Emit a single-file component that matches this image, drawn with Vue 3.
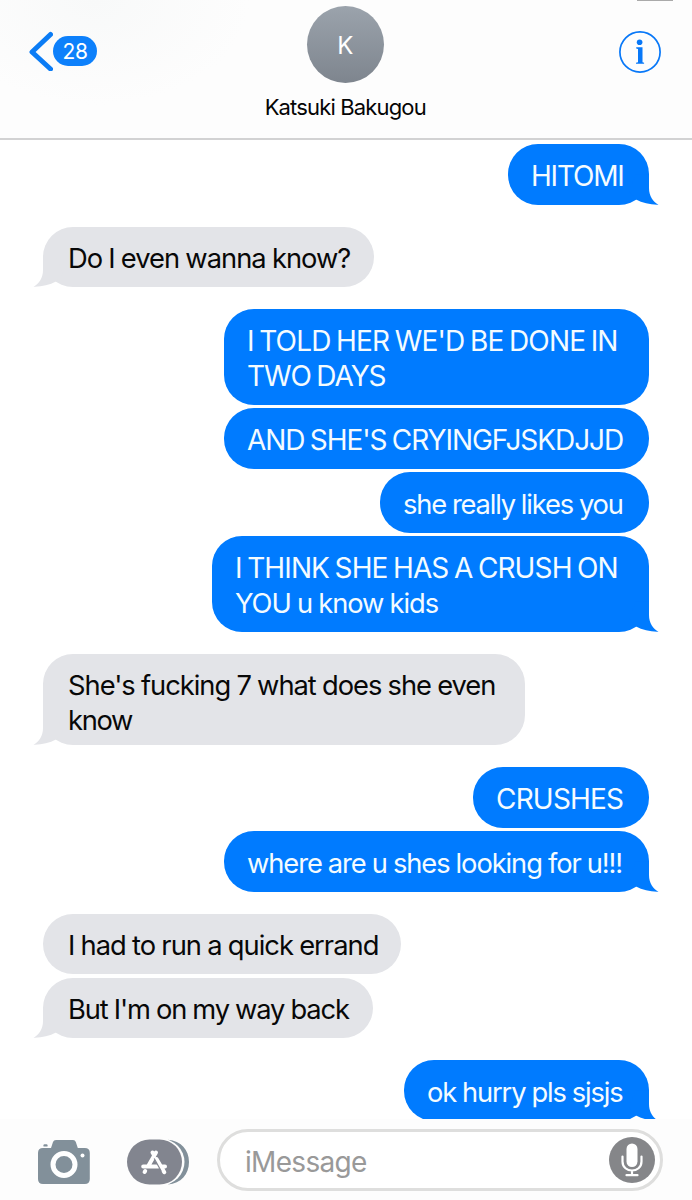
<template>
  <div class="chat">
    <header class="chat-header">
      <button class="back-btn" title="Back">
        <svg class="back-icon" viewBox="0 0 24 40" width="24" height="40">
          <path d="M21.5 3.500 3 21 21.500 38" />
        </svg>
        <span class="unread">28</span>
      </button>

      <div class="contact">
        <div class="avatar">K</div>
        <span class="contact-name">Katsuki Bakugou</span>
      </div>

      <button class="info-btn" title="Info">
        <svg viewBox="0 0 42 42" width="42" height="42">
          <circle cx="21" cy="21" r="20.1" fill="none" stroke="#0878f8" stroke-width="1.7" />
          <circle cx="20.6" cy="11.2" r="2.8" fill="#0878f8" />
          <path d="M17.200 16.300h6.300v15l1.600.4v1h-8.100v-1l2-.4V18l-1.800-.5z" fill="#0878f8" />
        </svg>
      </button>
      <span class="status-mark"></span>
    </header>

    <main class="messages">
      <div v-for="(group, g) in groups" :key="g" class="group" :class="group.from">
        <div
          v-for="(message, m) in group.messages"
          :key="m"
          class="bubble"
          :class="{ long: message.lines.length > 1 }"
          :style="{ width: message.width + 'px' }"
        >
          <svg v-if="m === group.messages.length - 1" class="tail" viewBox="0 0 34 34" width="34" height="34">
            <path d="M24 3.500V17C24 25 28 31 33.500 33.700C26 34 17.500 32 11 28.500L4 20L11 3.500Z" />
          </svg>
          <span
            v-for="line in message.lines"
            :key="line.text"
            class="line"
            :class="{ caps: isCaps(line.text) }"
            :style="{ letterSpacing: line.spacing + 'px' }"
          >{{ line.text }}</span>
        </div>
      </div>
    </main>

    <footer class="composer">
      <svg class="camera" viewBox="0 0 54 46" width="54" height="46">
        <path
          d="M6 9h8l2-6q.6-2 3-2h17q2.200 0 2.800 2l2 6h7q5 0 5 5v26q0 5-5 5H6q-5 0-5-5V14q0-5 5-5z"
          fill="#82909a"
        />
        <path d="M6.500 7.500V6.200q0-1 1-1h2q1 0 1 1v1.300z" fill="#82909a" />
        <circle cx="27" cy="25.500" r="11" fill="none" stroke="#fff" stroke-width="5" />
        <circle cx="45.500" cy="16.500" r="2" fill="#fff" />
      </svg>

      <svg class="apps" viewBox="0 0 63 46" width="63" height="46">
        <path d="M41 .8c13 1.200 21 10 21 22.200S54 44.500 41 45.500c17-8 17-36 0-44.700z" fill="#82909a" />
        <rect x="0" y="0" width="57.500" height="46" rx="23" fill="#fdfdfd" />
        <rect x="0" y=".5" width="55" height="45" rx="22.500" fill="#82858f" />
        <g fill="none" stroke="#fff" stroke-width="4" stroke-linecap="round">
          <path d="M29 13.500 21 27.500M25.500 13.500l1.500 2.500M29.500 20l7.800 13.200M16.200 27.500h15M35.500 27.500h2.500" />
          <path d="m18.200 32-.6 1" />
        </g>
        <path d="m27.200 19.500 7.200 13" fill="none" stroke="#82858f" stroke-width="1.200" />
      </svg>

      <div class="input-box">
        <span class="placeholder">iMessage</span>
        <button class="mic-btn" title="Dictate">
          <svg viewBox="0 0 46 46" width="46" height="46">
            <rect x="17.500" y="6.500" width="11" height="23.500" rx="5.500" fill="#fff" />
            <path
              d="M13.500 19.500v5c0 12 19 12 19 0v-5M23 33.500V38M17.500 38.200h11"
              fill="none"
              stroke="#fff"
              stroke-width="2.200"
              stroke-linecap="round"
            />
          </svg>
        </button>
      </div>
    </footer>
  </div>
</template>

<script setup>
const groups = [
  {
    from: 'me',
    messages: [{ width: 141, lines: [{ text: 'HITOMI', spacing: -1.2 }] }]
  },
  {
    from: 'them',
    messages: [{ width: 331, lines: [{ text: 'Do I even wanna know?', spacing: -0.98 }] }]
  },
  {
    from: 'me',
    messages: [
      {
        width: 425,
        lines: [
          { text: "I TOLD HER WE'D BE DONE IN", spacing: -0.84 },
          { text: 'TWO DAYS', spacing: -1.05 }
        ]
      },
      { width: 425, lines: [{ text: "AND SHE'S CRYINGFJSKDJJD", spacing: -1.05 }] },
      { width: 269, lines: [{ text: 'she really likes you', spacing: -1.18 }] },
      {
        width: 437,
        lines: [
          { text: 'I THINK SHE HAS A CRUSH ON', spacing: -0.88 },
          { text: 'YOU u know kids', spacing: -1.02 }
        ]
      }
    ]
  },
  {
    from: 'them',
    messages: [
      {
        width: 482,
        lines: [
          { text: "She's fucking 7 what does she even", spacing: -1 },
          { text: 'know', spacing: -1.3 }
        ]
      }
    ]
  },
  {
    from: 'me',
    messages: [
      { width: 176, lines: [{ text: 'CRUSHES', spacing: -0.8 }] },
      { width: 425, lines: [{ text: 'where are u shes looking for u!!!', spacing: -1.08 }] }
    ]
  },
  {
    from: 'them',
    messages: [
      { width: 358, lines: [{ text: 'I had to run a quick errand', spacing: -0.97 }] },
      { width: 330, lines: [{ text: "But I'm on my way back", spacing: -1.1 }] }
    ]
  },
  {
    from: 'me',
    messages: [{ width: 245, lines: [{ text: 'ok hurry pls sjsjs', spacing: -1.15 }] }]
  }
]

const isCaps = (text) => text === text.toUpperCase()
</script>

<style>
body {
  background: #fff;
}
</style>

<style scoped>
.chat {
  display: flex;
  flex-direction: column;
  width: 692px;
  height: 1200px;
  overflow: hidden;
  background: #fff;
  font-family: Inter, 'Liberation Sans', sans-serif;
}

button {
  padding: 0;
  border: none;
  background: none;
  font-family: inherit;
}

svg {
  display: block;
  flex-shrink: 0;
}

.chat-header {
  position: relative;
  display: grid;
  grid-template-columns: 1fr 200px 1fr;
  box-sizing: border-box;
  height: 140px;
  flex-shrink: 0;
  border-bottom: 2px solid #d2d2d3;
  background: radial-gradient(ellipse 155px 105px at 95px 0, #f8f9f9, #fdfdfd);
}

.back-btn {
  display: flex;
  align-items: center;
  align-self: start;
  margin: 31px 0 0 29px;
}

.back-icon path {
  fill: none;
  stroke: #0b7cf5;
  stroke-width: 5;
  stroke-linecap: round;
  stroke-linejoin: round;
}

.unread {
  width: 44px;
  height: 30px;
  border-radius: 15px;
  background: #0d80fb;
  color: #fff;
  font-size: 21px;
  line-height: 32px;
  letter-spacing: -0.5px;
  text-align: center;
}

.contact {
  display: flex;
  flex-direction: column;
  align-items: center;
  padding: 5.5px 1.5px 0 0;
}

.avatar {
  width: 77px;
  height: 77px;
  border-radius: 50%;
  background: linear-gradient(#9ba3ac, #7e858e);
  color: #fff;
  font-size: 24px;
  line-height: 80px;
  text-align: center;
}

.contact-name {
  margin-top: 10px;
  color: #050505;
  font-size: 22px;
  line-height: 28px;
  letter-spacing: -0.85px;
  white-space: nowrap;
}

.info-btn {
  align-self: start;
  justify-self: end;
  margin: 31px 31px 0 0;
}

.status-mark {
  position: absolute;
  top: 0;
  right: 19px;
  width: 36px;
  height: 1px;
  background: #aaa;
}

.messages {
  display: flex;
  flex: 1;
  flex-direction: column;
  gap: 22px;
  min-height: 0;
  overflow: hidden;
  padding: 4px 43px 0;
}

.group {
  display: flex;
  flex-direction: column;
  flex-shrink: 0;
  gap: 3.5px;
}

.me {
  align-items: flex-end;
  color: #f4fbff;
}

.them {
  align-items: flex-start;
  color: #080808;
}

.bubble {
  position: relative;
  box-sizing: border-box;
  height: 60.5px;
  padding: 14.5px 0 0 23px;
  border-radius: 30px;
  background: #007bff;
}

.bubble.long {
  height: 95.5px;
}

.them .bubble {
  padding-top: 14px;
  padding-left: 25px;
  background: #e3e4e8;
}

.them .bubble.long {
  height: 91.5px;
}

.line {
  position: relative;
  display: block;
  font-size: 27.3px;
  line-height: 35px;
  word-spacing: -0.5px;
  white-space: nowrap;
}

.line.caps {
  font-size: 28px;
  word-spacing: -1.5px;
}

.tail {
  position: absolute;
  right: -10px;
  bottom: 0;
  fill: #007bff;
}

.them .tail {
  right: auto;
  left: -10px;
  fill: #e3e4e8;
  transform: scaleX(-1);
}

.composer {
  display: flex;
  align-items: center;
  box-sizing: border-box;
  height: 81px;
  flex-shrink: 0;
  padding: 0 29px 0 37px;
  background: #fdfdfd;
}

.camera {
  margin-top: 5px;
}

.apps {
  margin: 4px 0 0 36px;
}

.input-box {
  display: flex;
  flex: 1;
  align-items: center;
  justify-content: space-between;
  box-sizing: border-box;
  height: 62px;
  margin-left: 27px;
  padding: 0 5px 0 25px;
  border: 3px solid #dededd;
  border-radius: 31px;
  background: #fff;
}

.placeholder {
  padding-top: 4px;
  color: #999;
  font-size: 28px;
  letter-spacing: -0.7px;
}

.mic-btn {
  width: 46px;
  height: 46px;
  border-radius: 50%;
  background: #858689;
}
</style>
